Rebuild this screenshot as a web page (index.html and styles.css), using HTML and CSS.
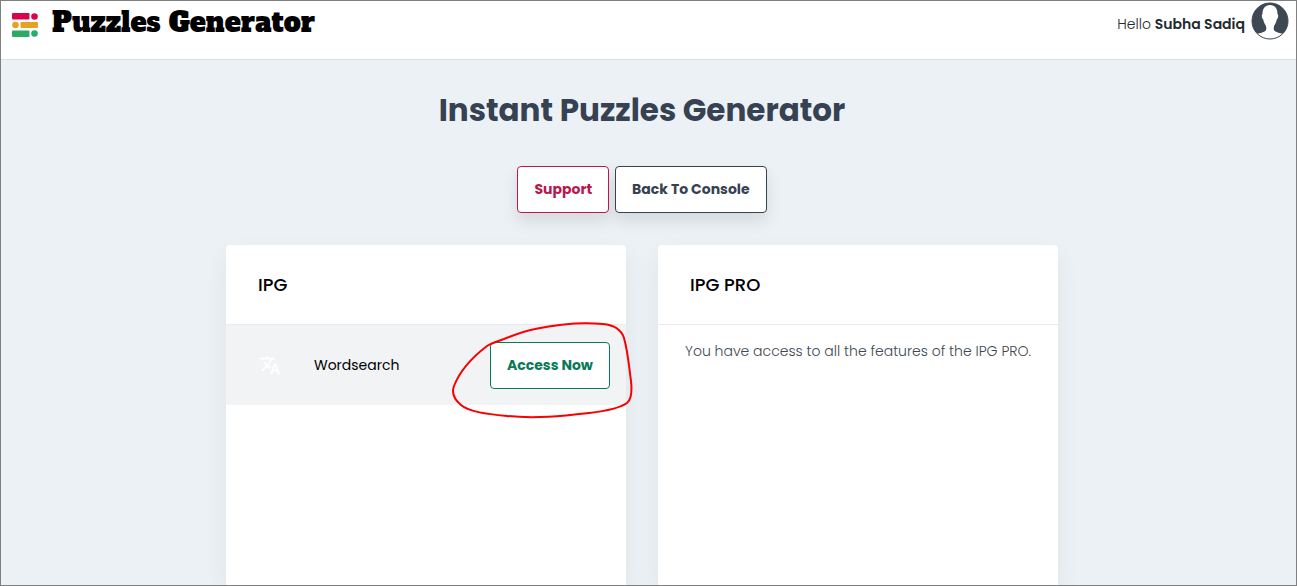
FILE: index.html
```
<!DOCTYPE html>
<html lang="en">
<head>
    <meta charset="UTF-8">
    <meta name="viewport" content="width=device-width, initial-scale=1">
    <title>Puzzles Generator</title>
    <link rel="stylesheet" href="styles.css">
</head>
<body>
    <div class="page">
        <header class="topbar">
            <a class="brand" href="#">
                <svg class="logo" viewBox="0 0 26 24" aria-hidden="true">
                    <g fill="#d8054c"><rect x="0" y="0" width="17.500" height="6.500" rx="1"/><circle cx="22.5" cy="3.5" r="3.3"/></g>
                    <g fill="#e5a323"><circle cx="3.5" cy="12" r="3.3"/><rect x="8.500" y="9" width="17.500" height="6" rx="1"/></g>
                    <g fill="#2bab68"><rect x="0" y="17.500" width="17.500" height="6.500" rx="1"/><circle cx="22.5" cy="20.5" r="3.3"/></g>
                </svg>
                <span>Puzzles Generator</span>
            </a>
            <div class="user">
                <span class="greeting">Hello <strong>Subha Sadiq</strong></span>
                <svg class="avatar" viewBox="0 0 38 38" aria-hidden="true">
                    <circle cx="19" cy="19" r="18" fill="#3d4852"/>
                    <path fill="#fff" d="M19 3C24 3 26.500 6.500 26.500 12C27.800 12.500 27.200 16.500 25.800 17.500C25.200 20.500 24 22.500 23 24C22.500 27 22.500 28.500 24.500 29.500C27.500 31 31 31.500 32.500 32A18 18 0 0 1 5.500 32C7 31.500 10.500 31 13.500 29.500C15.500 28.500 15.500 27 15 24C14 22.500 12.800 20.500 12.200 17.500C10.800 16.500 10.200 12.500 11.500 12C11.500 6.500 14 3 19 3Z"/>
                    <circle cx="19" cy="19" r="18" fill="none" stroke="#3d4852"/>
                </svg>
            </div>
        </header>

        <main class="content">
            <h1>Instant Puzzles Generator</h1>
            <div class="actions">
                <button type="button" class="btn btn-support">Support</button>
                <button type="button" class="btn btn-console">Back To Console</button>
            </div>

            <div class="cards">
                <section class="card">
                    <h2>IPG</h2>
                    <div class="tool">
                        <svg class="tool-icon" viewBox="0 0 24 24" aria-hidden="true"><path fill="#fff" d="M12.870 15.070l-2.540-2.510.03-.03A17.520 17.520 0 0 0 14.070 6H17V4h-7V2H8v2H1v2h11.170C11.500 7.920 10.440 9.750 9 11.350 8.070 10.320 7.300 9.190 6.690 8h-2c.73 1.630 1.730 3.170 2.980 4.560l-5.090 5.020L4 19l5-5 3.110 3.110.76-2.040zM18.500 10h-2L12 22h2l1.120-3h4.750L21 22h2l-4.500-12zm-2.620 7l1.620-4.330L19.120 17h-3.240z"/></svg>
                        <span class="tool-name">Wordsearch</span>
                        <div class="tool-action">
                            <button type="button" class="btn btn-access">Access Now</button>
                            <svg class="marker" viewBox="0 0 182 98" aria-hidden="true">
                                <path d="M53 18C44 21 41 22 36 25C19 38 8 52 3 65C0 73 4 79 10 84C18 91 36 93 56 95C84 98 112 95 138 92C155 90 169 87 176 82C181 78 181 69 180 60C178 46 177 31 173 17C170 8 163 4 152 3C132 1 108 3 84 8C73 10 63 14 53 18Z"/>
                            </svg>
                        </div>
                    </div>
                </section>
                <section class="card">
                    <h2>IPG PRO</h2>
                    <p>You have access to all the features of the IPG PRO.</p>
                </section>
            </div>
        </main>
    </div>
</body>
</html>
```
FILE: styles.css
```
* { box-sizing: border-box; }
body { margin: 0; font-family: Poppins, Inter, sans-serif; font-size: 14px; line-height: 20px; color: #22292f; }
h1, h2, p { margin: 0; }

.page { min-height: 100vh; display: flex; flex-direction: column; border: 1px solid #808080; background: #ecf1f5; }

.topbar { display: flex; justify-content: space-between; align-items: flex-start; height: 59px; padding: 1px 7px 0 11px; background: #fff; border-bottom: 1px solid #dae1e7; }
.brand { display: flex; align-items: center; gap: 14px; height: 42px; color: #000; text-decoration: none; font-family: "Alfa Slab One", "DejaVu Serif", serif; font-size: 27px; font-weight: 400; }
.logo { width: 26px; height: 24px; margin-top: 4px; }
.user { display: flex; align-items: center; gap: 6px; font-weight: 300; }
.greeting { padding-top: 6px; }
.user strong { font-weight: 600; }
.avatar { width: 38px; height: 38px; }

.content { flex: 1; display: flex; flex-direction: column; align-items: center; padding: 30px 13px 0 0; }
h1 { font-size: 31px; line-height: 40px; font-weight: 700; color: #364152; }

.actions { display: flex; gap: 6px; margin: 36px 0 32px; }
.btn { height: 47px; padding: 0 16px; background: #fff; border: 1px solid; border-radius: 4px; font-family: inherit; font-size: 14px; font-weight: 700; white-space: nowrap; cursor: pointer; }
.btn-support { color: #b9184f; box-shadow: 0 8px 16px rgba(0, 0, 0, 0.1); }
.btn-console { color: #364152; box-shadow: 0 8px 16px rgba(0, 0, 0, 0.1); }
.btn-access { color: #087a55; }

.cards { flex: 1; display: grid; grid-template-columns: 1fr 1fr; gap: 32px; width: 100%; max-width: 832px; }
.card { background: #fff; border-radius: 4px 4px 0 0; box-shadow: 0 10px 24px rgba(0, 0, 0, 0.06); }
.card h2 { padding: 28px 32px 27px; border-bottom: 1px solid #e9ebed; font-size: 18px; line-height: 24px; font-weight: 500; color: #000; }
.card p { padding: 16px 16px 16px 27px; font-weight: 300; color: #3d4852; }

.tool { display: flex; align-items: center; height: 80px; padding: 0 16px 0 33px; background: #f2f3f5; }
.tool-icon { width: 22px; height: 22px; }
.tool-name { margin-left: 33px; color: #000; }
.tool-action { position: relative; margin-left: auto; }
.marker { position: absolute; top: -21px; left: -39px; width: 182px; height: 98px; fill: none; stroke: #f80000; stroke-width: 2; pointer-events: none; }
```
